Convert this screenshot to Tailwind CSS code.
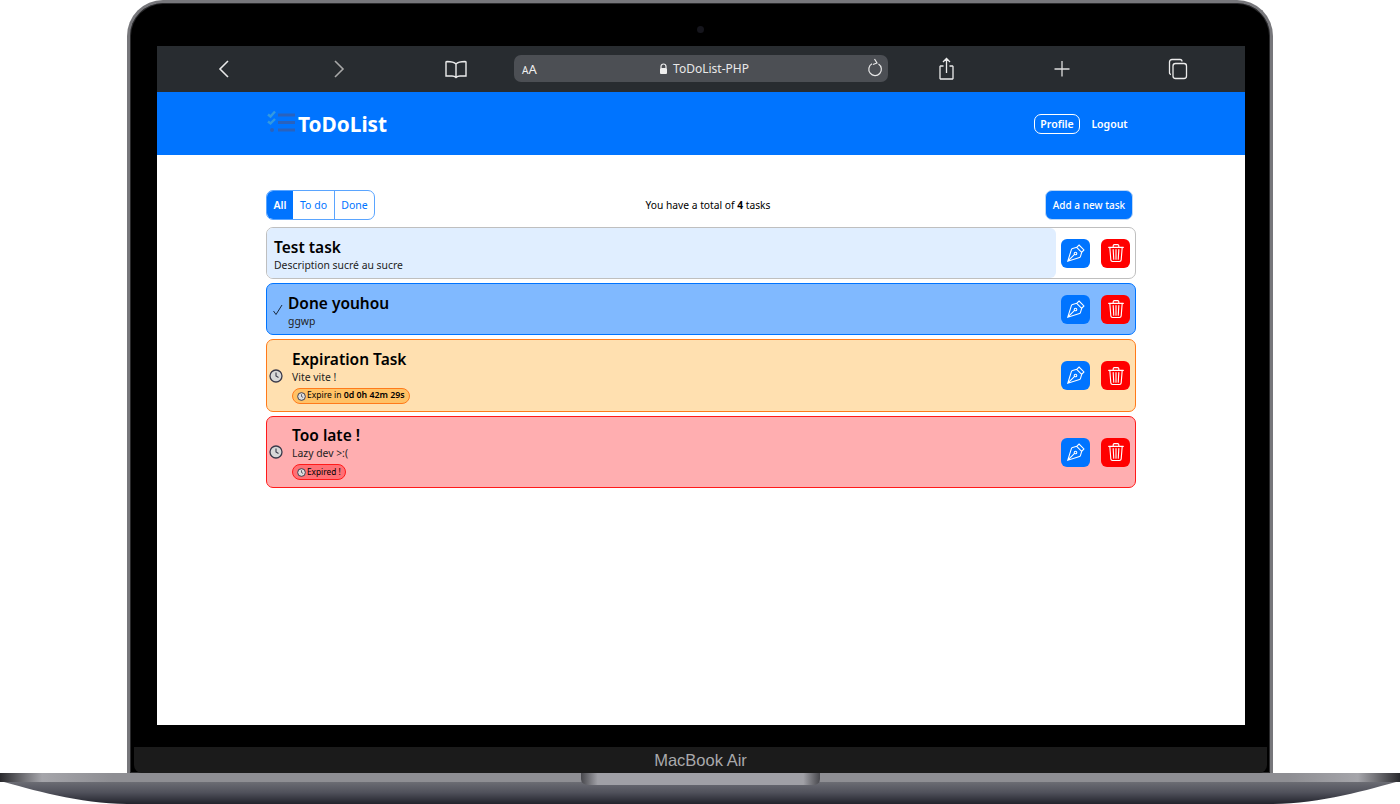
<!DOCTYPE html>
<html lang="en"><head><meta charset="utf-8"><title>ToDoList-PHP</title>
<script src="https://cdn.jsdelivr.net/npm/@tailwindcss/browser@4"></script></head>
<body class="bg-white w-[1400px] h-[804px] overflow-hidden font-['Noto_Sans',sans-serif] text-black">
<div class="w-[1146px] h-[773px] ml-[127px] bg-black rounded-t-[36px] border-x-[3px] border-t-[3px] border-[#77777b] shadow-[inset_0_0_0_1px_#2a2a2c] flex flex-col items-center pt-[43px] relative">
  <div class="absolute left-1/2 top-[23px] -ml-[3px] w-[7px] h-[7px] rounded-full bg-[#15151c]"></div>
  <div class="w-[1088px] h-[679px] ml-[2px] bg-white flex flex-col shrink-0">
    <div class="h-[46px] bg-[#282c30] relative flex items-center shrink-0">
      <svg class="absolute left-[60px] top-[13px]" width="14" height="20" viewBox="0 0 14 20" fill="none" stroke="#e8e8e8" stroke-width="1.6"><path d="M11 2 3 10l8 8"/></svg>
      <svg class="absolute left-[175px] top-[13px]" width="14" height="20" viewBox="0 0 14 20" fill="none" stroke="#a8a8a8" stroke-width="1.6"><path d="m3 2 8 8-8 8"/></svg>
      <svg class="absolute left-[288px] top-[13px]" width="22" height="20" viewBox="0 0 22 20" fill="none" stroke="#ececec" stroke-width="1.4"><path d="M11 5C9 3 6 2.500 2 2.500L1 3v14h6c2 0 3 .5 4 1.500 1-1 2-1.500 4-1.500h6V3l-1-.5C16 2.500 13 3 11 5Zm0 0v13"/></svg>
      <div class="absolute left-[357px] top-[9px] w-[374px] h-[27px] rounded-[7px] bg-[#4c4f54] flex items-center justify-center pl-[6px]">
        <span class="absolute left-[8px] top-[6px] text-[#f0f0f0] text-[13px] leading-[16px]"><span class="text-[10px]">A</span>A</span>
        <svg width="9" height="12" viewBox="0 0 9 12" class="mr-[5px]"><path d="M2 5V3.500a2.500 2.500 0 0 1 5 0V5" fill="none" stroke="#eee" stroke-width="1.200"/><rect x="1" y="5" width="7" height="6" rx="1" fill="#eee"/></svg>
        <span class="text-[#e8e8e8] text-[12px] leading-[16px]">ToDoList-PHP</span>
        <svg class="absolute right-[4px] top-[3px]" width="18" height="20" viewBox="0 0 18 20" fill="none" stroke="#e8e8e8" stroke-width="1.200"><path d="M6 5.800a6.300 6.300 0 1 0 6.500.2M8.500 1l2.500 4-4 1.500"/></svg>
      </div>
      <svg class="absolute left-[781px] top-[11px]" width="18" height="24" viewBox="0 0 18 24" fill="none" stroke="#ececec" stroke-width="1.300"><path d="M5.500 9H2.500l-.5.5v12l.5.5h12l.5-.5v-12l-.5-.5h-3M8.500 16V2M5 5l3.500-3.500L12 5"/></svg>
      <svg class="absolute left-[896px] top-[14px]" width="18" height="18" viewBox="0 0 18 18" fill="none" stroke="#ddd" stroke-width="1.300"><path d="M9 1v15.500M1.500 9h15"/></svg>
      <svg class="absolute left-[1011px] top-[12px]" width="20" height="22" viewBox="0 0 20 22" fill="none" stroke="#ececec" stroke-width="1.300"><rect x="5" y="5.500" width="13.500" height="15" rx="2.500"/><path d="M3 16.500c-1 0-1.500-.8-1.500-1.800V4c0-1.500 1-2.500 2.500-2.500h8c1 0 2 .5 2 2"/></svg>
    </div>
    <header class="h-[63px] bg-[#0074ff] shrink-0 flex items-center pl-[110px] pr-[117px]">
      <svg width="30" height="24" viewBox="0 0 30 24" class="-mt-[3px] shrink-0" fill="none"><path d="m1 4.500 2.500 2L8 1.500M1 11.500l2.500 2L8 9" stroke="#3399e0" stroke-width="2.400"/><circle cx="5" cy="20" r="2" fill="#2a62bd"/><path d="M11 5h17M11 12.500h17M11 20h17" stroke="#2a62bd" stroke-width="2.800"/></svg>
      <span class="text-white font-bold text-[20.800px] leading-[28px] ml-[1px]">ToDoList</span>
      <span class="ml-auto border border-white rounded-[7px] h-[20px] w-[46px] flex items-center justify-center text-white font-semibold text-[10.500px] pt-[2px]">Profile</span>
      <span class="ml-[11px] w-[37px] text-white font-semibold text-[10.500px] text-center pt-[2px]">Logout</span>
    </header>
    <main class="flex-1 pt-[35px] pl-[109px] w-[979px] flex flex-col">
      <div class="flex items-center h-[30px] pr-[3px]">
        <div class="w-[109px] h-[30px] flex border border-[#5aa5ff] rounded-[7px] overflow-hidden text-[10.500px] text-[#0074ff] shrink-0">
          <span class="w-[26px] bg-[#0074ff] text-white font-semibold flex items-center justify-center pt-[1px]">All</span>
          <span class="w-[42px] border-r border-[#5aa5ff] flex items-center justify-center pt-[1px]">To do</span>
          <span class="flex-1 flex items-center justify-center pt-[1px]">Done</span>
        </div>
        <span class="flex-1 text-center text-[10.250px] pr-[4px] pt-[1px]">You have a total of <b>4</b> tasks</span>
        <span class="w-[88px] h-[30px] bg-[#0074ff] text-white text-[10px] font-medium rounded-[7px] border border-[#bcd6f5] flex items-center justify-center shrink-0 pt-[1px]">Add a new task</span>
      </div>
      <div class="mt-[7px] flex flex-col gap-[4px] w-[870px]">
        <div class="h-[52px] rounded-[7px] border border-[#bfbfbf] flex bg-white">
          <div class="w-[789px] bg-[#e0eeff] rounded-[6px] pl-[7px] pt-[4px] flex flex-col justify-center">
            <h2 class="font-semibold text-[15.500px] leading-[20px]">Test task</h2>
            <p class="text-[10.400px] leading-[16px] text-[#222]">Description sucré au sucre</p>
          </div>
          <div class="flex-1 flex items-center gap-[11px] pl-[5px]">
            <span class="w-[29px] h-[29px] rounded-[6px] bg-[#0074ff] flex items-center justify-center"><svg width="19" height="19" viewBox="0 0 16 16" fill="none" stroke="#fff" stroke-width=".9"><path d="M1.500 14.500 4.600 4.600Q4.800 4 5.500 3.800L9 2.800l4.200 4.200-1 3.500Q12 11.200 11.400 11.400ZM9 2.800 11 .9 15.100 5l-1.900 2M1.500 14.500 7.200 8.800"/><circle cx="8" cy="8" r="1.100"/></svg></span>
            <span class="w-[29px] h-[29px] rounded-[6px] bg-[#ff0000] flex items-center justify-center"><svg width="18" height="18" viewBox="0 0 16 16" fill="#fff"><path d="M6.500 1h3a.5.5 0 0 1 .5.5v1H6v-1a.5.5 0 0 1 .5-.5ZM11 2.500v-1A1.500 1.500 0 0 0 9.500 0h-3A1.500 1.500 0 0 0 5 1.500v1H1.500a.5.5 0 0 0 0 1h.538l.853 10.660A2 2 0 0 0 4.885 16h6.230a2 2 0 0 0 1.994-1.840l.853-10.660h.538a.5.5 0 0 0 0-1H11Zm1.958 1-.846 10.580a1 1 0 0 1-.997.920h-6.230a1 1 0 0 1-.997-.920L3.042 3.500h9.916Zm-7.487 1a.5.5 0 0 1 .528.470l.5 8.500a.5.5 0 0 1-.998.060L5 5.030a.5.5 0 0 1 .47-.530Zm5.058 0a.5.5 0 0 1 .47.530l-.5 8.500a.5.5 0 1 1-.998-.060l.5-8.500a.5.5 0 0 1 .528-.470ZM8 4.500a.5.5 0 0 1 .5.500v8.500a.5.5 0 0 1-1 0V5a.5.5 0 0 1 .5-.500Z"/></svg></span>
          </div>
        </div>
        <div class="h-[52px] rounded-[7px] border border-[#0074ff] flex items-center bg-[#80b9ff]">
          <span class="w-[21px] flex justify-center shrink-0 pt-[2px]"><svg width="12" height="12" viewBox="0 0 12 12" fill="none" stroke="#1a2b40" stroke-width="1"><path d="m1.500 7 2.500 3.500L10 1"/></svg></span>
          <div class="w-[768px] pt-[4px] flex flex-col justify-center">
            <h2 class="font-semibold text-[15.500px] leading-[20px]">Done youhou</h2>
            <p class="text-[10.400px] leading-[16px] text-[#222]">ggwp</p>
          </div>
          <div class="flex-1 flex items-center gap-[11px] pl-[5px]">
            <span class="w-[29px] h-[29px] rounded-[6px] bg-[#0074ff] flex items-center justify-center"><svg width="19" height="19" viewBox="0 0 16 16" fill="none" stroke="#fff" stroke-width=".9"><path d="M1.500 14.500 4.600 4.600Q4.800 4 5.500 3.800L9 2.800l4.200 4.200-1 3.500Q12 11.200 11.400 11.400ZM9 2.800 11 .9 15.100 5l-1.900 2M1.500 14.500 7.200 8.800"/><circle cx="8" cy="8" r="1.100"/></svg></span>
            <span class="w-[29px] h-[29px] rounded-[6px] bg-[#ff0000] flex items-center justify-center"><svg width="18" height="18" viewBox="0 0 16 16" fill="#fff"><path d="M6.500 1h3a.5.5 0 0 1 .5.5v1H6v-1a.5.5 0 0 1 .5-.5ZM11 2.500v-1A1.500 1.500 0 0 0 9.500 0h-3A1.500 1.500 0 0 0 5 1.500v1H1.500a.5.5 0 0 0 0 1h.538l.853 10.660A2 2 0 0 0 4.885 16h6.230a2 2 0 0 0 1.994-1.840l.853-10.660h.538a.5.5 0 0 0 0-1H11Zm1.958 1-.846 10.580a1 1 0 0 1-.997.920h-6.230a1 1 0 0 1-.997-.920L3.042 3.500h9.916Zm-7.487 1a.5.5 0 0 1 .528.470l.5 8.500a.5.5 0 0 1-.998.060L5 5.030a.5.5 0 0 1 .47-.530Zm5.058 0a.5.5 0 0 1 .47.530l-.5 8.500a.5.5 0 1 1-.998-.060l.5-8.500a.5.5 0 0 1 .528-.470ZM8 4.500a.5.5 0 0 1 .5.500v8.500a.5.5 0 0 1-1 0V5a.5.5 0 0 1 .5-.500Z"/></svg></span>
          </div>
        </div>
        <div class="h-[73px] rounded-[7px] border border-[#ff7a1a] flex items-center bg-[#ffe0b0]">
          <span class="w-[25px] flex justify-start pl-[2px] shrink-0"><svg width="14" height="14" viewBox="0 0 14 14" fill="none"><circle cx="7" cy="7" r="6" fill="#d8d8d8" stroke="#3a3a4a" stroke-width="1.300"/><path d="M7 3.500V7l2.500 1.500" stroke="#3a3a4a" stroke-width="1.100"/></svg></span>
          <div class="w-[764px] pt-[2px] flex flex-col justify-center items-start">
            <h2 class="font-semibold text-[15.500px] leading-[20px]">Expiration Task</h2>
            <p class="text-[10.400px] leading-[16px] text-[#222]">Vite vite !</p>
            <span class="mt-[3px] h-[16px] rounded-full border border-[#ff7a1a] bg-[#ffc266] flex items-center px-[4px] text-[8.500px] gap-[1px]"><svg width="9" height="9" viewBox="0 0 14 14" fill="none"><circle cx="7" cy="7" r="6" fill="#ddd" stroke="#3a3a4a" stroke-width="1.500"/><path d="M7 3.500V7l2.500 1.500" stroke="#3a3a4a" stroke-width="1.200"/></svg><span>Expire in <b class="font-semibold text-[8.800px]">0d 0h 42m 29s</b></span></span>
          </div>
          <div class="flex-1 flex items-center gap-[11px] pl-[5px]">
            <span class="w-[29px] h-[29px] rounded-[6px] bg-[#0074ff] flex items-center justify-center"><svg width="19" height="19" viewBox="0 0 16 16" fill="none" stroke="#fff" stroke-width=".9"><path d="M1.500 14.500 4.600 4.600Q4.800 4 5.500 3.800L9 2.800l4.200 4.200-1 3.500Q12 11.200 11.400 11.400ZM9 2.800 11 .9 15.100 5l-1.900 2M1.500 14.500 7.200 8.800"/><circle cx="8" cy="8" r="1.100"/></svg></span>
            <span class="w-[29px] h-[29px] rounded-[6px] bg-[#ff0000] flex items-center justify-center"><svg width="18" height="18" viewBox="0 0 16 16" fill="#fff"><path d="M6.500 1h3a.5.5 0 0 1 .5.5v1H6v-1a.5.5 0 0 1 .5-.5ZM11 2.500v-1A1.500 1.500 0 0 0 9.500 0h-3A1.500 1.500 0 0 0 5 1.500v1H1.500a.5.5 0 0 0 0 1h.538l.853 10.660A2 2 0 0 0 4.885 16h6.230a2 2 0 0 0 1.994-1.840l.853-10.660h.538a.5.5 0 0 0 0-1H11Zm1.958 1-.846 10.580a1 1 0 0 1-.997.920h-6.230a1 1 0 0 1-.997-.920L3.042 3.500h9.916Zm-7.487 1a.5.5 0 0 1 .528.470l.5 8.500a.5.5 0 0 1-.998.060L5 5.030a.5.5 0 0 1 .47-.530Zm5.058 0a.5.5 0 0 1 .47.530l-.5 8.500a.5.5 0 1 1-.998-.060l.5-8.500a.5.5 0 0 1 .528-.470ZM8 4.500a.5.5 0 0 1 .5.500v8.500a.5.5 0 0 1-1 0V5a.5.5 0 0 1 .5-.500Z"/></svg></span>
          </div>
        </div>
        <div class="h-[72px] rounded-[7px] border border-[#ff1a1a] flex items-center bg-[#ffaeb0]">
          <span class="w-[25px] flex justify-start pl-[2px] shrink-0"><svg width="14" height="14" viewBox="0 0 14 14" fill="none"><circle cx="7" cy="7" r="6" fill="#d8d8d8" stroke="#3a3a4a" stroke-width="1.300"/><path d="M7 3.500V7l2.500 1.500" stroke="#3a3a4a" stroke-width="1.100"/></svg></span>
          <div class="w-[764px] pt-[1px] flex flex-col justify-center items-start">
            <h2 class="font-semibold text-[15.500px] leading-[20px]">Too late !</h2>
            <p class="text-[10.400px] leading-[16px] text-[#222]">Lazy dev &gt;:(</p>
            <span class="mt-[3px] h-[16px] rounded-full border border-[#ff1a1a] bg-[#ff7075] flex items-center px-[4px] text-[8.300px] gap-[1px]"><svg width="9" height="9" viewBox="0 0 14 14" fill="none"><circle cx="7" cy="7" r="6" fill="#ddd" stroke="#3a3a4a" stroke-width="1.500"/><path d="M7 3.500V7l2.500 1.500" stroke="#3a3a4a" stroke-width="1.200"/></svg><span>Expired !</span></span>
          </div>
          <div class="flex-1 flex items-center gap-[11px] pl-[5px]">
            <span class="w-[29px] h-[29px] rounded-[6px] bg-[#0074ff] flex items-center justify-center"><svg width="19" height="19" viewBox="0 0 16 16" fill="none" stroke="#fff" stroke-width=".9"><path d="M1.500 14.500 4.600 4.600Q4.800 4 5.500 3.800L9 2.800l4.200 4.200-1 3.500Q12 11.200 11.400 11.400ZM9 2.800 11 .9 15.100 5l-1.900 2M1.500 14.500 7.200 8.800"/><circle cx="8" cy="8" r="1.100"/></svg></span>
            <span class="w-[29px] h-[29px] rounded-[6px] bg-[#ff0000] flex items-center justify-center"><svg width="18" height="18" viewBox="0 0 16 16" fill="#fff"><path d="M6.500 1h3a.5.5 0 0 1 .5.5v1H6v-1a.5.5 0 0 1 .5-.5ZM11 2.500v-1A1.500 1.500 0 0 0 9.500 0h-3A1.500 1.500 0 0 0 5 1.500v1H1.500a.5.5 0 0 0 0 1h.538l.853 10.660A2 2 0 0 0 4.885 16h6.230a2 2 0 0 0 1.994-1.840l.853-10.660h.538a.5.5 0 0 0 0-1H11Zm1.958 1-.846 10.580a1 1 0 0 1-.997.920h-6.230a1 1 0 0 1-.997-.920L3.042 3.500h9.916Zm-7.487 1a.5.5 0 0 1 .528.470l.5 8.500a.5.5 0 0 1-.998.060L5 5.030a.5.5 0 0 1 .47-.530Zm5.058 0a.5.5 0 0 1 .47.530l-.5 8.500a.5.5 0 1 1-.998-.060l.5-8.500a.5.5 0 0 1 .528-.470ZM8 4.500a.5.5 0 0 1 .5.500v8.500a.5.5 0 0 1-1 0V5a.5.5 0 0 1 .5-.500Z"/></svg></span>
          </div>
        </div>
      </div>
    </main>
  </div>
  <div class="mt-[22px] ml-[1px] w-[1133px] h-[26px] bg-[#1b1b1b] rounded-b-[8px] flex items-center justify-center font-['Liberation_Sans',sans-serif] text-[#a9a9ab] text-[16.500px] leading-[26px]">MacBook Air</div>
</div>
<div class="h-[31px] w-[1400px] relative">
  <svg width="1400" height="31" viewBox="0 0 1400 31" class="block">
    <defs>
      <linearGradient id="b" x1="0" y1="0" x2="0" y2="1"><stop offset="0" stop-color="#6e6f76"/><stop offset=".5" stop-color="#50515b"/><stop offset="1" stop-color="#22232c"/></linearGradient>
      <linearGradient id="t" x1="0" y1="0" x2="1" y2="0"><stop offset="0" stop-color="#2a2a2e"/><stop offset=".018" stop-color="#75757a"/><stop offset=".03" stop-color="#a5a5aa"/><stop offset=".08" stop-color="#8e8e93"/><stop offset=".92" stop-color="#8e8e93"/><stop offset=".97" stop-color="#a5a5aa"/><stop offset=".982" stop-color="#75757a"/><stop offset="1" stop-color="#2a2a2e"/></linearGradient>
      <linearGradient id="n" x1="0" y1="0" x2="1" y2="0"><stop offset="0" stop-color="#47474c"/><stop offset=".07" stop-color="#a0a0a6"/><stop offset=".93" stop-color="#a0a0a6"/><stop offset="1" stop-color="#47474c"/></linearGradient>
    </defs>
    <path d="M0 8H1400C1370 16 1320 31 1273 31H127C80 31 30 16 0 8Z" fill="url(#b)"/>
    <rect width="1400" height="9" fill="url(#t)"/>
    <path d="M581 0H820V6Q820 12 812 12H590Q581 12 581 6Z" fill="url(#n)"/>
  </svg>
</div>
</body></html>
